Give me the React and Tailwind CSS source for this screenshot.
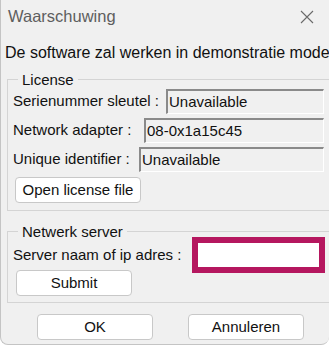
import React from "react";

const font = { fontFamily: '"Liberation Sans", Arial, sans-serif' };

function Field({ label, value, labelW }) {
  return (
    <div className="flex items-center h-[29px]">
      <div className="whitespace-nowrap text-[15px] text-[#111] pl-[5px]" style={{ width: labelW }}>
        {label}
      </div>
      <div className="flex-1 h-[25px] border-t-2 border-l-2 border-[#8a8a8a] border-r border-r-white border-b border-b-white bg-[#f0f0f0] flex items-center pl-[1px] text-[15px] text-[#111] whitespace-nowrap">
        {value}
      </div>
    </div>
  );
}

function Btn({ children, className }) {
  return (
    <button className={"h-[26px] bg-white border border-[#c8c8c8] rounded-[4px] text-[15px] text-[#111] flex items-center justify-center " + className}>
      {children}
    </button>
  );
}

export default function App() {
  return (
    <div className="w-[329px] h-[345px] bg-[#f0f0f0] overflow-hidden rounded-b-[8px] border-l border-b border-[#c4c4c4] select-none" style={font}>
      <div className="h-[33px] flex items-center justify-between pl-[7px] pr-[15px]">
        <span className="text-[16.5px] text-[#5e5e5e]">Waarschuwing</span>
        <svg width="14" height="14" viewBox="0 0 14 14" className="mt-[1px]">
          <path d="M1 1 L13 13 M13 1 L1 13" stroke="#6a6a6a" strokeWidth="1.1" fill="none" />
        </svg>
      </div>
      <div className="pl-[4px] mt-[10px] text-[16px] text-[#111] whitespace-nowrap leading-[20px]">
        De software zal werken in demonstratie mode
      </div>

      <fieldset className="ml-[6px] mr-[-10px] mt-[8px] border border-[#d4d4d4] pl-[0px] pr-[14px] pb-[7px] pt-0">
        <legend className="ml-[10px] px-[4px] text-[15px] text-[#111] leading-[17px]">License</legend>
        <div className="mt-[-1px]">
          <Field label="Serienummer sleutel :" value="Unavailable" labelW={158} />
          <Field label="Network adapter :" value="08-0x1a15c45" labelW={136} />
          <Field label="Unique identifier :" value="Unavailable" labelW={131} />
          <div className="pl-[7px] pt-[3px]">
            <Btn className="w-[126px]">Open license file</Btn>
          </div>
        </div>
      </fieldset>

      <fieldset className="ml-[6px] mr-[-10px] mt-[12px] border border-[#d4d4d4] pr-[13px] pb-[6px] pt-0">
        <legend className="ml-[10px] px-[4px] text-[15px] text-[#111] leading-[17px]">Netwerk server</legend>
        <div className="flex items-center h-[36px] mt-[-3px]">
          <div className="whitespace-nowrap text-[15px] text-[#111] pl-[5px] w-[184px]">Server naam of ip adres :</div>
          <div className="flex-1 h-[36px] border-[6px] border-[#b5175f] bg-white" />
        </div>
        <div className="pl-[8px]">
          <Btn className="w-[116px] mt-[-3px]">Submit</Btn>
        </div>
      </fieldset>

      <div className="flex pl-[36px] gap-[35px] mt-[11px]">
        <Btn className="w-[116px]">OK</Btn>
        <Btn className="w-[116px]">Annuleren</Btn>
      </div>
    </div>
  );
}
